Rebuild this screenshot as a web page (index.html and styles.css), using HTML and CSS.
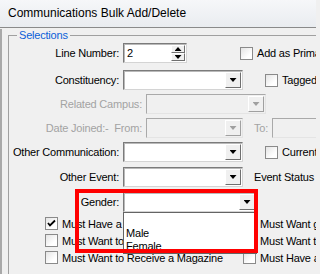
FILE: index.html
```html
<!DOCTYPE html>
<html>
<head>
<meta charset="utf-8">
<link rel="stylesheet" href="styles.css">
</head>
<body>
<div class="window">
  <div class="titlebar">Communications Bulk Add/Delete</div>
  <div class="client">
    <fieldset class="group">
      <legend>Selections</legend>

      <div class="row r1">
        <span class="lbl">Line Number:</span>
        <div class="field spin">
          <span class="val">2</span>
          <span class="spinbtns"><span class="sb up"></span><span class="sb down"></span></span>
        </div>
        <span class="check c-prim"><span class="cb"></span>Add as Primary</span>
      </div>

      <div class="row r2">
        <span class="lbl">Constituency:</span>
        <div class="field combo w120"><span class="ddbtn"></span></div>
        <span class="check c-right"><span class="cb"></span>Tagged</span>
      </div>

      <div class="row r3">
        <span class="lbl wide dis">Related Campus:</span>
        <div class="field combo w120 disabled"><span class="ddbtn"></span></div>
      </div>

      <div class="row r4">
        <span class="lbl wide dis">Date Joined:-&nbsp; From:</span>
        <div class="field combo w97 disabled"><span class="ddbtn"></span></div>
        <span class="to dis">To:</span>
        <div class="field w80 disabled"></div>
      </div>

      <div class="row r5">
        <span class="lbl">Other Communication:</span>
        <div class="field combo w120"><span class="ddbtn"></span></div>
        <span class="check c-right"><span class="cb"></span>Current</span>
      </div>

      <div class="row r6">
        <span class="lbl">Other Event:</span>
        <div class="field combo w120"><span class="ddbtn"></span></div>
        <span class="to">Event Status</span>
      </div>

      <div class="row r7">
        <span class="lbl">Gender:</span>
        <div class="gender">
          <div class="field combo w134"><span class="ddbtn"></span></div>
          <div class="ddlist">
            <div class="item"></div>
            <div class="item">Male</div>
            <div class="item">Female</div>
          </div>
        </div>
      </div>

      <div class="checks">
        <span class="check"><span class="cb on"><svg viewBox="0 0 11 11" width="11" height="11"><polyline points="2,5 4,7.5 9,2.5" fill="none" stroke="#000" stroke-width="1.8"/></svg></span>Must Have a Mailing Address</span>
        <span class="check"><span class="cb"></span>Must Want gifts Acknowledged</span>
        <span class="check"><span class="cb"></span>Must Want to Receive Mail</span>
        <span class="check"><span class="cb"></span>Must Want to Receive Email</span>
        <span class="check"><span class="cb"></span>Must Want to Receive a Magazine</span>
        <span class="check"><span class="cb"></span>Must Have an Email Address</span>
      </div>
    </fieldset>
  </div>
  <div class="highlight"></div>
</div>
</body>
</html>
```

FILE: styles.css
```css
* { box-sizing: border-box; }
html, body { margin: 0; padding: 0; background: #f0f0f0; }

.window {
  width: 316px;
  height: 274px;
  overflow: hidden;
  position: relative;
  background: #f0f0f0;
  font-family: "Liberation Sans", Arial, sans-serif;
  font-size: 11px;
  letter-spacing: -0.2px;
  color: #000;
}

.titlebar {
  height: 28px;
  border-bottom: 1px solid #8a8a8a;
  background: linear-gradient(#f6f7f9, #e9ecf0);
  padding: 0 0 2px 8px;
  display: flex;
  align-items: center;
  font-size: 12px;
  letter-spacing: 0;
  white-space: nowrap;
}

.client {
  height: 246px;
  border-left: 2px solid #a9a9a9;
  padding-left: 6px;
}

.group {
  margin: 1px 0 0 0;
  padding: 0;
  min-width: 0;
  height: 320px;
  border: 1px solid #a0a0a0;
  border-right: none;
  border-bottom: none;
}
.group legend {
  margin-left: 8px;
  padding: 0 2px;
  line-height: 12px;
  color: #0b5fd8;
}

.row {
  display: flex;
  align-items: center;
  height: 20px;
  white-space: nowrap;
}
.r1 { margin-top: 2px; }
.r2 { margin-top: 7px; }
.r3, .r4, .r5 { margin-top: 4px; }
.r6, .r7 { margin-top: 5px; }

.lbl {
  flex: none;
  width: 110px;
  margin-right: 4px;
  text-align: right;
}
.lbl.wide { width: 133px; }
.dis { color: #a3a3a3; }

.field {
  flex: none;
  height: 20px;
  display: flex;
  align-items: stretch;
  background: #fff;
  border: 1px solid;
  border-color: #7b7b7b #d4d4d4 #d4d4d4 #7b7b7b;
  box-shadow: inset 1px 1px 0 #b9b9b9;
}
.field.disabled {
  background: #f0f0f0;
  border-color: #a9a9a9 #e4e4e4 #e4e4e4 #a9a9a9;
  box-shadow: none;
}
.w120 { width: 120px; }
.w97 { width: 97px; }
.w80 { width: 80px; }
.w134 { width: 134px; }

.ddbtn {
  margin: 1px 1px 1px auto;
  width: 16px;
  background: #f0f0f0;
  border: 1px solid;
  border-color: #ffffff #6f6f6f #6f6f6f #ffffff;
  display: flex;
  align-items: center;
  justify-content: center;
}
.ddbtn::after {
  content: "";
  width: 7px;
  height: 4px;
  background: #000;
  clip-path: polygon(0 0, 100% 0, 50% 100%);
}
.disabled .ddbtn { border-color: #ffffff #a0a0a0 #a0a0a0 #ffffff; }
.disabled .ddbtn::after { background: #a0a0a0; }

.spin { width: 64px; }
.spin .val { padding: 2px 0 0 3px; line-height: 14px; }
.spinbtns {
  margin: 1px 1px 1px auto;
  width: 14px;
  display: flex;
  flex-direction: column;
}
.sb {
  flex: 1;
  background: #f0f0f0;
  border: 1px solid;
  border-color: #ffffff #6f6f6f #6f6f6f #ffffff;
  display: flex;
  align-items: center;
  justify-content: center;
}
.sb::after {
  content: "";
  width: 7px;
  height: 4px;
  background: #000;
}
.sb.up::after { clip-path: polygon(50% 0, 100% 100%, 0 100%); }
.sb.down::after { clip-path: polygon(0 0, 100% 0, 50% 100%); }

.check {
  display: flex;
  align-items: center;
  white-space: nowrap;
}
.cb {
  flex: none;
  width: 13px;
  height: 13px;
  margin-right: 4px;
  border: 1px solid #8a8a8a;
  background: linear-gradient(135deg, #e4e4e4, #ffffff 70%);
  display: flex;
  align-items: center;
  justify-content: center;
}
.c-prim { margin-left: 53px; }
.c-right { margin-left: 22px; }
.to { margin-left: 11px; margin-right: 4px; }

.gender { position: relative; }
.ddlist {
  position: absolute;
  left: 0;
  top: 100%;
  width: 134px;
  height: 42px;
  background: #fff;
  border: 1px solid #646464;
  padding: 1px 0 0 2px;
  z-index: 2;
}
.ddlist .item { height: 13px; line-height: 13px; }

.checks {
  display: grid;
  grid-template-columns: 198px auto;
  grid-auto-rows: 17px;
  padding-left: 36px;
  margin-top: 3px;
}

.highlight {
  position: absolute;
  left: 75px;
  top: 189px;
  width: 183px;
  height: 64px;
  border: 4px solid #f00;
  z-index: 3;
}
```
